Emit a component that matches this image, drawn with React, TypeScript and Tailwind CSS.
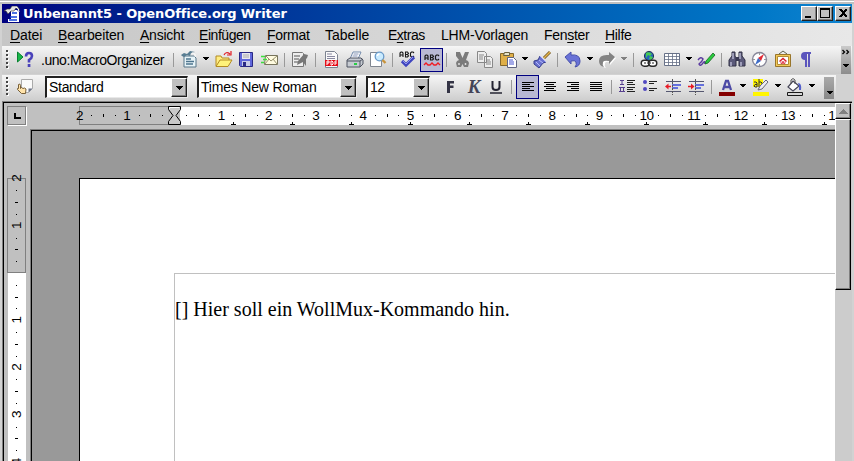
import type { ReactNode } from "react";

const ui = "font-['Liberation_Sans',Arial,sans-serif]";

function Icon({ className, children }: { className: string; children: ReactNode }) {
  return (
    <svg className={`h-[18px] w-[18px] shrink-0 overflow-visible ${className}`} viewBox="0 0 18 18" fill="none">
      {children}
    </svg>
  );
}

function Sep({ className }: { className: string }) {
  return <div className={`h-[14px] w-px shrink-0 bg-[#999] ${className}`} />;
}

function Arrow({ className, dim = false }: { className: string; dim?: boolean }) {
  return (
    <svg className={`-mt-[2px] h-[4px] w-[7px] shrink-0 ${className}`} viewBox="0 0 7 4" shapeRendering="crispEdges">
      <path d="M1 0h6v1H1zM2 1h4v1H2zM3 2h2v1H3z" fill={dim ? "#808080" : "#000"} />
    </svg>
  );
}

function Handle() {
  return (
    <svg className="ml-1 h-[20px] w-[3px] shrink-0" viewBox="0 0 3 20" shapeRendering="crispEdges">
      {[0, 4, 8, 12, 16].map((y) => (
        <g key={y}>
          <rect x="1" y={y + 1} width="2" height="2" fill="#fff" />
          <rect x="0" y={y} width="2" height="2" fill="#444" />
        </g>
      ))}
    </svg>
  );
}

function Combo({ className, text, label }: { className: string; text: string; label: string }) {
  return (
    <div className={`flex h-[22px] shrink-0 border-t-2 border-l-2 border-r border-b border-t-[#202020] border-l-[#202020] border-r-[#e8e8e8] border-b-[#e8e8e8] bg-white ${className}`}>
      <div className="flex-1 pl-[2px]">
        <span className={`block whitespace-nowrap leading-[19px] ${label}`}>{text}</span>
      </div>
      <div className="flex w-4 items-center justify-center border border-t-white border-l-white border-r-[#202020] border-b-[#202020] bg-[#c0c0c0] shadow-[inset_-1px_-1px_0_#808080]">
        <svg className="h-[4px] w-[7px]" viewBox="0 0 7 4" shapeRendering="crispEdges">
          <path d="M0 0h7v1H0zM1 1h5v1H1zM2 2h3v1H2zM3 3h1v1H3z" fill="#000" />
        </svg>
      </div>
    </div>
  );
}

function Menu({ pre = "", hot = "", post, className }: { pre?: string; hot?: string; post: string; className: string }) {
  return (
    <span className={`shrink-0 whitespace-nowrap ${className}`}>
      {pre}
      <span className="underline decoration-1 underline-offset-2">{hot}</span>
      {post}
    </span>
  );
}

function TitleBar() {
  return (
    <div className="mx-[2px] flex h-[19px] shrink-0 items-center bg-linear-to-r from-[#000080] to-[#1084d0]">
      <svg className="ml-[2px] h-4 w-4" viewBox="0 0 16 16">
        <path d="M7 4h6l2 2v10H4v-3h3z" fill="#fff" />
        <path d="M8 7h5M6 11h7M5 14h8" stroke="#1446d8" strokeWidth="1.6" />
        <path d="M0 5 3 3l3 0 2-3h5l3 4-4-2-2 3-3 0-3 3-2-3z" fill="#e4e4e4" stroke="#333" strokeWidth=".6" />
        <path d="M12 1q3 1 3 5" stroke="#fff" strokeWidth="1" fill="none" />
      </svg>
      <span className="ml-[3px] whitespace-nowrap font-['DejaVu_Sans',Verdana,sans-serif] text-[13px] leading-[19px] font-bold tracking-[-0.08px] text-white">
        Unbenannt5 - OpenOffice.org Writer
      </span>
      <div className="mr-[1px] ml-auto flex">
        {["M3 9h6v2H3z", "M2 1h10v10H2zM3 3v7h8V3z", "M3 2h2l2 2 2-2h2v1L8 6l3 3v1H9L7 8l-2 2H3V9l3-3-3-3z"].map((d, i) => (
          <div key={d} className={`h-[15px] w-4 border border-t-white border-l-white border-r-[#202020] border-b-[#202020] bg-[#c0c0c0] shadow-[inset_-1px_-1px_0_#808080] ${i === 2 ? "ml-[2px]" : ""}`}>
            <svg className="h-[13px] w-[14px]" viewBox="0 0 14 13" shapeRendering="crispEdges">
              <path d={d} fillRule="evenodd" fill="#000" />
            </svg>
          </div>
        ))}
      </div>
    </div>
  );
}

function MenuBar() {
  return (
    <div className={`mx-[2px] flex h-[23px] shrink-0 bg-linear-to-r from-[#c6c6c6] to-[#e8e8e8] pl-2 text-[14px] leading-[25px] text-black ${ui}`}>
      <Menu className="w-[48px] tracking-[-0.1px]" hot="D" post="atei" />
      <Menu className="w-[82px] tracking-[-0.15px]" hot="B" post="earbeiten" />
      <Menu className="w-[59px] tracking-[-0.25px]" hot="A" post="nsicht" />
      <Menu className="w-[68px] tracking-[-0.45px]" hot="E" post="infügen" />
      <Menu className="w-[58px] tracking-[-0.3px]" hot="F" post="ormat" />
      <Menu className="w-[63px]" post="Tabelle" />
      <Menu className="w-[53px] tracking-[-0.5px]" pre="E" hot="x" post="tras" />
      <Menu className="w-[103px] tracking-[-0.2px]" post="LHM-Vorlagen" />
      <Menu className="w-[61px] tracking-[-0.3px]" pre="Fen" hot="s" post="ter" />
      <Menu className="w-[40px] tracking-[-0.3px]" hot="H" post="ilfe" />
    </div>
  );
}

function StandardBar() {
  return (
    <div className="mx-[2px] flex h-[28px] shrink-0 items-center bg-linear-to-b from-[#f6f6f6] to-[#cacaca]">
      <Handle />
      <Icon className="ml-2">
        <path d="M.5 1 6 6 .5 11z" fill="#18b848" stroke="#078030" />
        <path d="M9 5.5q0-3.5 3-3.5t3 3q0 2-3 4v2.5" stroke="#4a42ba" strokeWidth="2.6" />
        <path d="M10.7 13h2.7v3h-2.7z" fill="#4a42ba" />
      </Icon>
      <span className={`ml-[6px] w-[124px] shrink-0 whitespace-nowrap text-[14px] tracking-[-0.45px] ${ui}`}>.uno:MacroOrganizer</span>
      <Sep className="ml-2" />
      <Icon className="ml-[6px]">
        <path d="M4 5h10l2 2v9H4z" fill="#e7f3f7" stroke="#587689" />
        <path d="M6 8h5M6 10.5h8M6 13h7" stroke="#4e758e" strokeWidth="1.4" />
        <path d="M1 4l3-2 3 1 3-3 5 1-4 1-1 3-3-1-3 2-2-1z" fill="#587d92" />
        <path d="M12 2q4 0 3 4" stroke="#fff" />
      </Icon>
      <Arrow className="ml-1" />
      <Icon className="ml-[6px]">
        <path d="M1 15V5h5l1 2h7v3" fill="#ffed83" stroke="#b38b22" />
        <path d="M1 15.5 5 9h12l-4 6.5z" fill="#fff27a" stroke="#b38b22" />
        <path d="M9 4q2-4 6-1M12 4h4V0" stroke="#e11c24" strokeWidth="1.2" />
      </Icon>
      <Icon className="ml-[5px]">
        <path d="M1.5 1.5h13v14h-12l-1-1z" fill="#6067db" stroke="#292985" />
        <path d="M4 2h8v6H4z" fill="#e7e7ef" />
        <path d="M5 4h6M5 6h6" stroke="#aaa" />
        <path d="M4 10h8v5H4z" fill="#c8cce8" />
        <path d="M5 11h3v4H5z" fill="#292985" />
      </Icon>
      <Icon className="ml-1">
        <path d="M5.500 4.500h12v9H4.500z" fill="#fffbe0" stroke="#77745c" />
        <path d="m6 5 5 5 6-5M5 13l4-5m8 5-4-5" stroke="#99946f" />
        <path d="M1 5.500h4M3 8.500h4M1 11.500h3" stroke="#3be03b" strokeWidth="1.4" />
      </Icon>
      <Sep className="ml-[6px]" />
      <Icon className="ml-[6px]">
        <path d="M1.500 1.500h10l1 1v13h-11z" fill="#eee" stroke="#777" />
        <path d="M3 5h6M3 8h5M3 11h4" stroke="#888" strokeWidth="1.4" />
        <path d="m6 14 1-4 6-7 4 1-1 3-1 1v7l-3-4-2 1z" fill="#777" />
      </Icon>
      <Sep className="ml-[6px]" />
      <Icon className="ml-[7px]">
        <path d="M2.500.500h9l3 3v13h-12z" fill="#fafafa" stroke="#7c8390" />
        <path d="M4 3h5M4 5.500h8M4 7.500h8" stroke="#8888a0" />
        <path d="M2 9h13v6H2z" fill="#e50d18" />
        <path d="M4 14v-4h2v2H4M8 10h1l1 1v2l-1 1H8zM12 14v-4h2M12 12h2" stroke="#fff" />
      </Icon>
      <Icon className="ml-[5px]">
        <path d="M4 8 7 1h8l-3 7z" fill="#fff" stroke="#738bac" />
        <path d="M7.500 3h5M6.500 5h5" stroke="#8492b5" />
        <path d="m1 9 3-2h11l2 2v4l-3 3H1z" fill="#c6cbd2" stroke="#4d5260" />
        <path d="M1 10h13v6M14 10l3-2" stroke="#4d5260" />
        <path d="M8 13h3" stroke="#28ce45" strokeWidth="2" />
      </Icon>
      <Icon className="ml-[5px]">
        <path d="M1.500 1.500h7v4h4v10h-11z" fill="#fff" stroke="#808690" />
        <circle cx="10.500" cy="5.500" r="4.300" fill="#caebff" stroke="#6a9ac9" strokeWidth="1.300" />
        <path d="M8.500 5q0-2 2-2" stroke="#fff" strokeWidth="1.500" />
        <path d="m13.500 9 3 3" stroke="#c8933b" strokeWidth="2.400" />
      </Icon>
      <Sep className="ml-[5px]" />
      <Icon className="ml-[6px]">
        <path d="M1 6V2l1-1h1l1 1v4M1 4h3M6.500 1v5h2l1-1-1-1.500h-2 2l1-1-1-1.500zM15 2l-1-1h-1.500l-1 1v3l1 1H14l1-1" stroke="#181818" strokeWidth="1.100" />
        <path d="m3 10 4 4 8-8" stroke="#3f45bf" strokeWidth="3.200" />
        <path d="m4 10 3 3 7-7" stroke="#8e94ed" />
      </Icon>
      <div className="ml-[3px] flex h-6 w-[23px] shrink-0 items-center justify-center border border-[#000080] bg-[#b9b9d3]">
        <Icon className="">
          <path d="M2 9V5l1-1h1l1 1v4M2 7h3M7.500 4v5h2l1-1-1-1.500h-2 2l1-1-1-1.500zM16 5l-1-1h-1.500l-1 1v3l1 1H15l1-1" stroke="#181818" strokeWidth="1.200" />
          <path d="m1 14 2-2 2 2h2l2-2 2 2h2l2-2 2 2" stroke="#f11a22" strokeWidth="1.300" />
        </Icon>
      </div>
      <Sep className="ml-[3px]" />
      <Icon className="ml-[6px]">
        <path d="M3 1h4l2.500 6L12 1h4l-3 8 2 1 1 2-1 4h-4l-1.500-3L8 16H4l-1-4 1-2 2-1-3-4z" fill="#7b7b7b" />
        <path d="M6 12v2M12.500 12v2" stroke="#ddd" strokeWidth="1.500" />
      </Icon>
      <Icon className="ml-[5px]">
        <path d="M1.500.500h7l2 2v9h-9zM8.500 5.500h6l2 2v9h-8z" fill="#eee" stroke="#888" />
        <path d="M3 4h5M3 6h4M3 8h4M10 9h4M10 11h5M10 13h5" stroke="#888" />
      </Icon>
      <Icon className="ml-[6px]">
        <path d="M.500 2.500h13v12H.500z" fill="#dfaf48" stroke="#85682b" />
        <path d="M4.500 1.500h5v3h-6z" fill="#e8e3c7" stroke="#68603f" />
        <path d="M7.500 6.500h6l3 3v7h-9z" fill="#fff" stroke="#606480" />
        <path d="M9 9h4M9 11h5M9 13h5" stroke="#4752d0" />
      </Icon>
      <Arrow className="ml-[3px]" />
      <Icon className="ml-[5px]">
        <path d="m17 1-6 6" stroke="#725523" strokeWidth="3" />
        <path d="m17 1-6 6" stroke="#e5b64d" strokeWidth="1.400" />
        <path d="m7 5 6 6-3 1-4 5-5-4v-3l4-1z" fill="#6971d0" stroke="#363d8c" />
        <path d="m7 5 6 6M3 11l4 4M6 9l4 3" stroke="#b7bcfa" />
      </Icon>
      <Sep className="ml-[6px]" />
      <Icon className="ml-[6px]">
        <path d="m1 6 6-5v3q9-1 9 6 0 5-5 6 2-2 1-5-1-2-5-1v3z" fill="#6972d7" stroke="#4750ab" />
      </Icon>
      <Arrow className="ml-1" />
      <Icon className="ml-[5px]">
        <path d="m18 7-6-5v3Q3 4 3 11q0 5 5 6-2-2-1-5 1-2 5-1v3z" fill="#fff" />
        <path d="m17 6-6-5v3Q1 3 1 10q0 5 5 6-2-2-1-5 1-2 6-1v3z" fill="#838383" />
      </Icon>
      <Arrow className="ml-1" dim />
      <Sep className="ml-[6px]" />
      <Icon className="ml-[6px]">
        <circle cx="9" cy="5" r="4.600" fill="#2863bc" stroke="#263951" />
        <path d="M6 2q3-2 6 1l-2 2-2-1-2 3zM10 5l3 1-2 3-2-1z" fill="#45cb50" />
        <rect x="1.200" y="9.200" width="8" height="6" rx="3" fill="#fff" stroke="#282828" strokeWidth="1.400" />
        <rect x="8.800" y="9.200" width="8" height="6" rx="3" fill="#fff" stroke="#282828" strokeWidth="1.400" />
        <path d="M4 12h2M7 12h4M12 12h2" stroke="#222" strokeWidth="1.200" />
      </Icon>
      <Icon className="ml-[5px]">
        <path d="M1.500 2.500h15v12h-15z" fill="#fff" stroke="#667087" />
        <path d="M1 5.500h16M1 8.500h16M1 11.500h16M5.500 2v13M9.500 2v13M13.500 2v13" stroke="#667087" strokeWidth=".8" />
      </Icon>
      <Arrow className="ml-1" />
      <Icon className="ml-[5px]">
        <path d="M1 9q3-4 5-1-1 3-4 5 1 3 4-1 2-3 2 1" stroke="#5a399f" strokeWidth="1.400" />
        <path d="m8 13 1-3 7-8 2 2-7 8z" fill="#28cc3e" stroke="#176322" strokeWidth=".8" />
      </Icon>
      <Sep className="ml-[6px]" />
      <Icon className="ml-[6px]">
        <path d="M4 1h3v4l1 2v8H1V9l3-4zM11 1h3v4l3 4v6h-6V7z" fill="#5a5979" stroke="#303044" />
        <path d="M8 6h3v4H8z" fill="#383852" />
        <path d="M5 2v6M12 2v6M3 11v4M13 11v4" stroke="#c3c3dc" strokeWidth="1.300" />
      </Icon>
      <Icon className="ml-[5px]">
        <circle cx="8.500" cy="8.500" r="7" fill="#fff" stroke="#889" strokeWidth="1.400" />
        <path d="M8.500 2v2M8.500 13v2M2 8.500h2M13 8.500h2" stroke="#999" />
        <path d="m13 3-3 7-3-3z" fill="#e02a36" />
        <path d="m4 14 3-7 3 3z" fill="#3e6cc6" />
      </Icon>
      <Icon className="ml-[5px]">
        <path d="m5 3 4-3 4 3" stroke="#5d604c" />
        <path d="M1.500 3.500h15v12h-15z" fill="#f3c958" stroke="#98752b" />
        <path d="M3.500 5.500h11v8h-11z" fill="#fff" stroke="#b08b37" />
        <path d="m5.500 10.500 3.500-3 3.500 3" stroke="#d91e2e" strokeWidth="1.400" />
        <path d="M7 10.500v2h1.500v-2h1v2H11v-2" stroke="#d91e2e" strokeWidth=".8" />
      </Icon>
      <Icon className="ml-[5px]">
        <path d="M5 1h9v2h-1v13h-2V3h-1v13H8V9Q4 9 4 5q0-4 4-4z" fill="#5b55bd" />
      </Icon>
      <div className="mr-[1px] ml-auto flex h-full w-[10px] shrink-0 flex-col items-center bg-linear-to-b from-[#cacaca] to-[#8c8c8c]">
        <svg className="h-[28px] w-[10px]" viewBox="0 0 10 28">
          <path d="m1.500 4 2 2-2 2M5.500 4l2 2-2 2" stroke="#000" strokeWidth="1.300" fill="none" />
          <path d="M2 18h6v1H2zM3 19h4v1H3zM4 20h2v1H4z" fill="#000" />
        </svg>
      </div>
    </div>
  );
}

function FormatBar() {
  return (
    <div className="mx-[2px] flex h-[26px] w-[834px] shrink-0 items-center bg-linear-to-b from-[#f6f6f6] to-[#cdcdcd] pb-[2px]">
      <Handle />
      <Icon className="ml-2">
        <path d="M4.500 1.500h11v9l-4 4h-7z" fill="#fafafa" stroke="#aaa" />
        <path d="m15.500 10.500-4 4v-4z" fill="#6c7489" />
        <path d="M1.500 6.500q1.500-1.500 2 1v3l1-1 1.500 1 1.500-.5 1.500 1-.5 4.500h-4l-4-4q-.5-1.500 1-1z" fill="#ffe3aa" stroke="#6a5028" strokeWidth=".9" />
      </Icon>
      <Combo className="ml-[10px] w-[143px]" text="Standard" label={`text-[14px] tracking-[-0.3px] ${ui}`} />
      <Combo className="ml-[9px] w-[160px]" text="Times New Roman" label={`text-[14px] tracking-[-0.2px] ${ui}`} />
      <Combo className="ml-[9px] w-[64px]" text="12" label={`text-[14px] tracking-[-0.6px] ${ui}`} />
      <Icon className="ml-[14px]"><path d="M3 3h7v2.500H6v2h3.500V10H6v5H3z" fill="#343445" /></Icon>
      <span className="ml-[3px] w-[18px] shrink-0 text-center font-['Liberation_Serif',serif] text-[19px] leading-[18px] font-bold text-[#444458] italic">K</span>
      <Icon className="ml-1">
        <path d="M5.500 3v6q0 3 3.500 3t3.500-3V3" stroke="#242432" strokeWidth="2" />
        <path d="M3 15h12" stroke="#242432" strokeWidth="1.500" />
      </Icon>
      <Sep className="ml-[6px]" />
      <div className="ml-1 flex h-6 w-[23px] shrink-0 items-center justify-center border border-[#000080] bg-[#b9b9d3]">
        <svg className="h-[12px] w-[12px]" viewBox="0 0 12 12" shapeRendering="crispEdges">
          <path d="M0 1h12M0 3h8M0 5h12M0 7h8M0 9h12" transform="translate(0 .5)" stroke="#000" />
        </svg>
      </div>
      <Icon className="ml-[2px]"><path d="M3 4.500h12M5 6.500h8M3 8.500h12M5 10.500h8M3 12.500h12" stroke="#000" shapeRendering="crispEdges" /></Icon>
      <Icon className="ml-[5px]"><path d="M3 4.500h12M7 6.500h8M3 8.500h12M7 10.500h8M3 12.500h12" stroke="#000" shapeRendering="crispEdges" /></Icon>
      <Icon className="ml-[5px]"><path d="M3 4.500h12M3 6.500h12M3 8.500h12M3 10.500h12M3 12.500h12" stroke="#000" shapeRendering="crispEdges" /></Icon>
      <Sep className="ml-[6px]" />
      <Icon className="ml-[7px]">
        <path d="M1 2.500h4M3 2v5M1 6.500h4M0 9.500h6M0 13.500h6M1.500 9v5M4.500 9v5" stroke="#58408f" />
        <path d="M8 2.500h8M8 4.500h6M8 6.500h8M8 9.500h8M8 11.500h6M8 13.500h8" stroke="#222" shapeRendering="crispEdges" />
      </Icon>
      <Icon className="ml-[5px]">
        <circle cx="3" cy="4" r="2" fill="#5149c0" /><circle cx="3" cy="11" r="2" fill="#5149c0" />
        <path d="M7 3.500h8M7 5.500h5M7 10.500h8M7 12.500h5" stroke="#222" shapeRendering="crispEdges" />
      </Icon>
      <Icon className="ml-1">
        <path d="M2 3.500h15M2 13.500h15" stroke="#555770" shapeRendering="crispEdges" />
        <path d="M8 6h9v2H8zM8 9h6v2H8z" fill="#6570dc" />
        <path d="M8.500 1v16" stroke="#555" strokeDasharray="2 1" />
        <path d="M7 8.500H3" stroke="#e81b26" strokeWidth="1.500" /><path d="M4.500 5.500v6l-3.500-3z" fill="#e81b26" />
      </Icon>
      <Icon className="ml-[5px]">
        <path d="M2 3.500h15M2 13.500h15" stroke="#555770" shapeRendering="crispEdges" />
        <path d="M8 6h9v2H8zM8 9h6v2H8z" fill="#6570dc" />
        <path d="M8.500 1v16" stroke="#555" strokeDasharray="2 1" />
        <path d="M1 8.500h4" stroke="#e81b26" strokeWidth="1.500" /><path d="M4 5.500v6l3.500-3z" fill="#e81b26" />
      </Icon>
      <Sep className="ml-[6px]" />
      <Icon className="ml-[6px]">
        <path d="m5 12 3-9h2l3 9M6 9h6" stroke="#4c49a5" strokeWidth="2.300" />
        <path d="M1 14h16v4H1z" fill="#850000" />
      </Icon>
      <Arrow className="ml-[3px]" />
      <Icon className="ml-[6px]">
        <path d="M1 1h10v8H1zM1 14h16v4H1z" fill="#fff500" />
        <path d="M2 4h2l1 1v4H3L2 8l1-1.500h2M7 1v8h2l1-1V5L9 4H7" stroke="#333" />
        <path d="m6 12 2-4 6-6 2 2-6 7z" fill="#ececf2" stroke="#686878" />
      </Icon>
      <Arrow className="ml-1" />
      <Icon className="ml-[5px]">
        <path d="m7 3 6 5-6 5-5-4z" fill="#fff" stroke="#454557" strokeWidth="1.200" />
        <path d="M5 6V2q2-3 4 0v4" stroke="#555" />
        <path d="M12 5q4 0 3 7h-2V8z" fill="#5360cc" />
        <path d="M1.500 14.500h15v3h-15z" fill="#d6d6d6" stroke="#181818" />
      </Icon>
      <Arrow className="ml-1" />
      <div className="mt-[2px] ml-[9px] flex h-[22px] w-[10px] shrink-0 items-end justify-center bg-linear-to-b from-[#aaa] to-[#888] pb-1">
        <svg className="h-[4px] w-[7px]" viewBox="0 0 7 4" shapeRendering="crispEdges"><path d="M1 0h6v1H1zM2 1h4v1H2zM3 2h2v1H3z" fill="#000" /></svg>
      </div>
    </div>
  );
}

const CM = 47.24;
const quarters = Array.from({ length: 64 }, (_, i) => i - 8).filter((q) => q % 4 !== 0);

function HorizontalRuler() {
  return (
    <svg className={`block h-[26px] w-[804px] shrink-0 text-[13.5px] ${ui}`} viewBox="31 103 804 26" shapeRendering="crispEdges">
      <rect x="79.500" y="106.500" width="95" height="18" fill="#c0c0c0" stroke="#808080" />
      <rect x="180" y="107" width="655" height="18" fill="#fff" />
      {quarters.map((q) => {
        const x = Math.round(174 + (q * CM) / 4);
        return q % 2 === 0 ? (
          <rect key={q} x={x} y="114" width="1" height="3" fill="#000" />
        ) : (
          <rect key={q} x={x} y="115" width="1" height="1" fill="#000" />
        );
      })}
      {Array.from({ length: 17 }, (_, i) => i - 2).filter((n) => n !== 0).map((n) => (
        <text key={n} x={174 + n * CM} y="120" textAnchor="middle" letterSpacing="-0.5">{Math.abs(n)}</text>
      ))}
      {Array.from({ length: 11 }, (_, i) => Math.round(233 + i * 59.05)).map((x) => (
        <path key={x} d={`M${x} 122h1v2h2v1h-5v-1h2z`} fill="#000" />
      ))}
      <g shapeRendering="auto">
        <path d="M168.500 106.500h12v3l-4.500 6 4.500 6v3h-12v-3l4.500-6-4.500-6z" fill="#c8c8c8" stroke="#000" />
        <path d="M169.500 109v-1.500h10" stroke="#fff" fill="none" />
      </g>
    </svg>
  );
}

function VerticalRuler() {
  return (
    <svg className={`block h-[332px] w-[26px] shrink-0 text-[13.5px] ${ui}`} viewBox="4 129 26 332" shapeRendering="crispEdges">
      <rect x="8" y="273" width="18" height="188" fill="#fff" />
      <rect x="7.500" y="178.500" width="18" height="94" fill="#c0c0c0" stroke="#808080" />
      {quarters.filter((q) => q < 16).map((q) => {
        const y = Math.round(273 + (q * CM) / 4);
        return q % 2 === 0 ? (
          <rect key={q} x="15" y={y} width="3" height="1" fill="#000" />
        ) : (
          <rect key={q} x="16" y={y} width="1" height="1" fill="#000" />
        );
      })}
      {[-2, -1, 1, 2, 3, 4].map((n) => (
        <text key={n} transform={`translate(21 ${272.5 + n * CM}) rotate(-90)`} textAnchor="middle">{Math.abs(n)}</text>
      ))}
    </svg>
  );
}

export default function App() {
  return (
    <div className="flex h-[461px] w-[854px] flex-col overflow-hidden bg-[#d2d2d2] text-black">
      <div className="h-[4px] shrink-0 border-t border-t-[#c0c0c0] bg-[#c0c0c0]">
        <div className="h-px bg-white" />
      </div>
      <TitleBar />
      <MenuBar />
      <StandardBar />
      <div className="h-px shrink-0 bg-[#d2d2d2]" />
      <FormatBar />
      <div className="ml-[2px] flex h-[360px] w-[850px] shrink-0 border-t border-l border-[#808080]">
        <div className="flex w-[849px] border-t border-l border-black bg-[#c0c0c0]">
          <div className="flex w-[831px] shrink-0 flex-col">
            <div className="flex h-[26px] shrink-0">
              <div className="w-[27px] shrink-0 pt-[3px] pl-[3px]">
                <div className="flex h-[20px] w-[20px] items-center justify-center border border-t-[#808080] border-l-[#808080] border-r-white border-b-white shadow-[inset_-1px_-1px_0_#808080]">
                  <svg className="h-[6px] w-[7px]" viewBox="0 0 7 6" shapeRendering="crispEdges"><path d="M0 0h2v4h5v2H0z" /></svg>
                </div>
              </div>
              <HorizontalRuler />
            </div>
            <div className="flex h-[332px]">
              <VerticalRuler />
              <div className="flex-1 border-t border-l border-[#808080]">
                <div className="h-full border-t border-l border-black bg-[#999] pt-[47px] pl-[47px]">
                  <div className="h-full border-t border-l border-black bg-white pt-[94px] pl-[94px]">
                    <div className="h-full border-t border-l border-[#c0c0c0] pt-[24px]">
                      <p className="font-['Liberation_Serif','Times_New_Roman',serif] text-[20px] leading-[23px] whitespace-nowrap">
                        [] Hier soll ein WollMux-Kommando hin.
                      </p>
                    </div>
                  </div>
                </div>
              </div>
            </div>
          </div>
          <div className="flex w-[16px] shrink-0 flex-col bg-[#cccccc]">
            <div className="flex h-[16px] shrink-0 items-center justify-center border border-t-white border-l-white border-r-black border-b-black bg-[#c0c0c0] shadow-[inset_-1px_-1px_0_#808080]">
              <svg className="h-[5px] w-[9px]" viewBox="0 0 9 5" shapeRendering="crispEdges"><path d="M4 0h1v1H4zM3 1h3v1H3zM2 2h5v1H2zM1 3h7v1H1zM0 4h9v1H0z" fill="#808080" /></svg>
            </div>
            <div className="h-[171px] shrink-0 border border-t-white border-l-white border-r-black border-b-black bg-[#c0c0c0] shadow-[inset_-1px_-1px_0_#808080]" />
          </div>
          <div className="flex-1 bg-[#ccc]" />
        </div>
      </div>
    </div>
  );
}
